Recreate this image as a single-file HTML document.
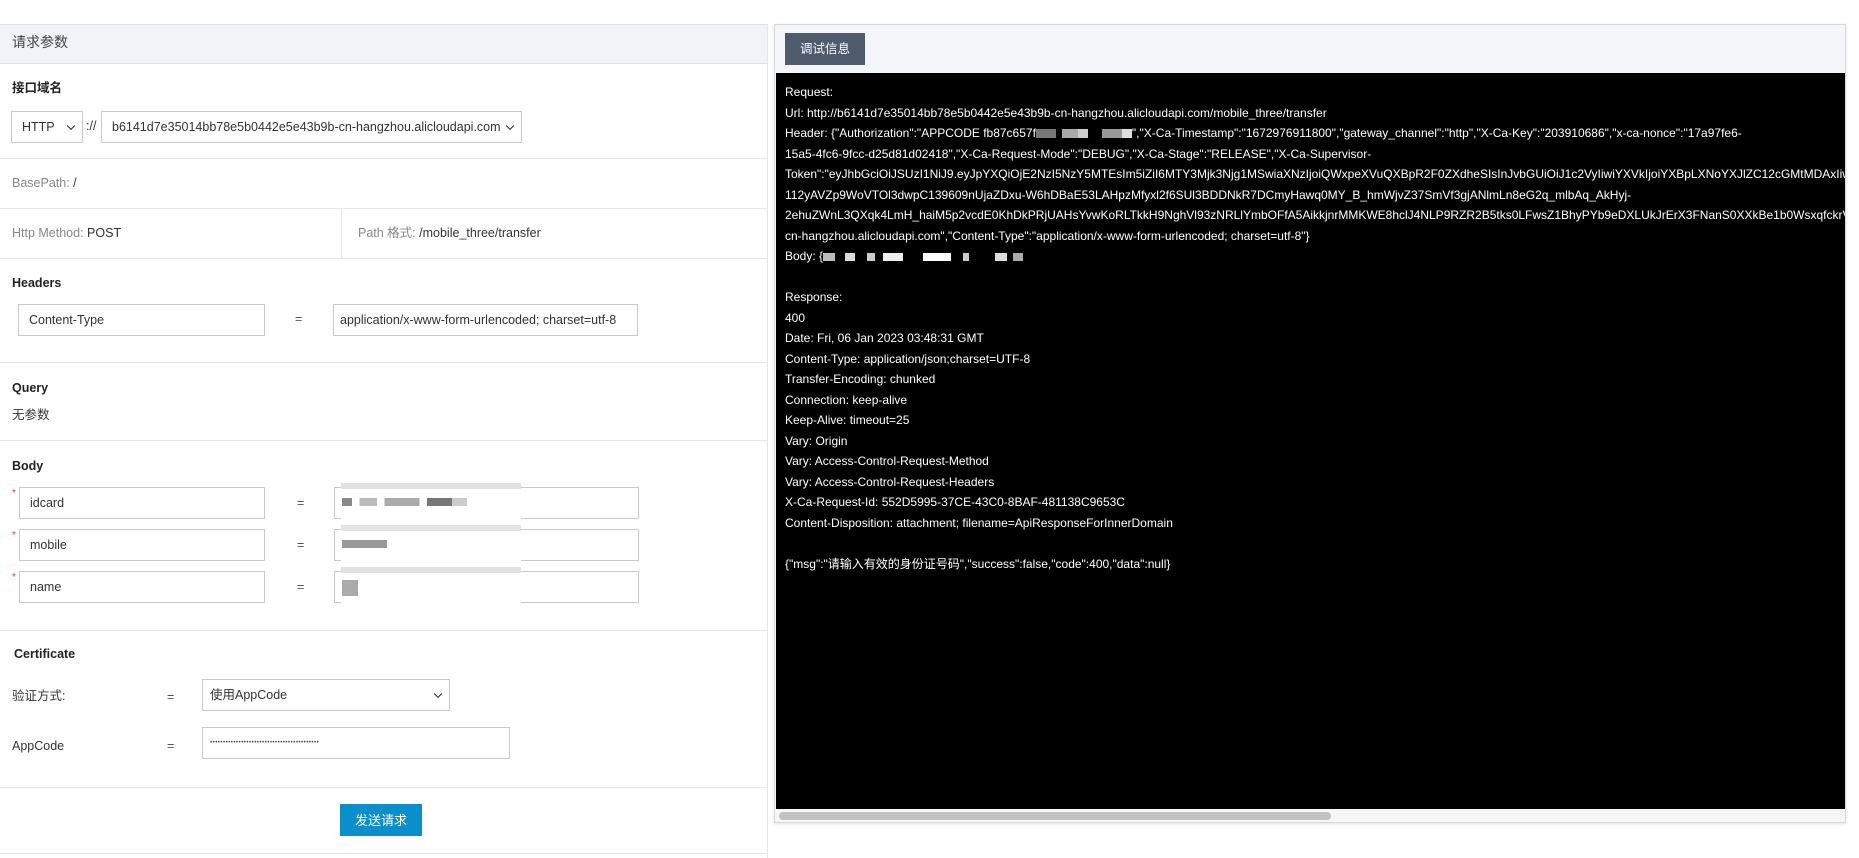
<!DOCTYPE html>
<html><head><meta charset="utf-8"><style>
*{box-sizing:border-box;margin:0;padding:0}
body{width:1859px;height:858px;background:#fff;font-family:"Liberation Sans","Noto Sans CJK SC",sans-serif;font-size:12.5px;color:#333;position:relative;overflow:hidden;line-height:15px}
.a{position:absolute;line-height:15px}
.hl{position:absolute;left:0;width:767px;height:1px;background:#e3e6ec}
.box{position:absolute;border:1px solid #c9c9c9;background:#fff;padding-left:10px;display:flex;align-items:center;font-size:12.5px;color:#333}
.b{font-weight:bold;color:#222}
.g{color:#888}
.star{position:absolute;color:#e33;font-size:10px}
.eq{position:absolute;color:#555}
.chev{position:absolute;right:8px;top:50%;width:6px;height:6px;border-right:1.6px solid #222;border-bottom:1.6px solid #222;transform:translateY(-70%) rotate(45deg)}
#con{position:absolute;left:776px;top:73px;width:1069px;height:736px;background:#000;overflow:hidden;color:#fff;font-size:12px;line-height:15px}
#con div{position:absolute;left:9px;white-space:nowrap}
.bl{display:inline-block;height:9px;vertical-align:middle}
</style></head><body>
<!-- left panel -->
<div class="a" style="left:0;top:24px;width:767px;height:40px;background:#f1f3f8;border-top:1px solid #dde1e8;border-bottom:1px solid #dde1e8"></div>
<div class="a" style="left:767px;top:24px;width:1px;height:834px;background:#e3e6ec"></div>
<div class="a" style="left:12px;top:35px;font-size:14px;color:#444">请求参数</div>
<div class="a b" style="left:12px;top:81px">接口域名</div>
<div class="box" style="left:11px;top:111px;width:72px;height:32px">HTTP<span class="chev"></span></div>
<div class="a" style="left:86px;top:119px">://</div>
<div class="box" style="left:101px;top:111px;width:421px;height:32px">b6141d7e35014bb78e5b0442e5e43b9b-cn-hangzhou.alicloudapi.com<span class="chev"></span></div>
<div class="hl" style="top:158px"></div>
<div class="a" style="left:12px;top:176px"><span class="g">BasePath:</span> /</div>
<div class="hl" style="top:208px"></div>
<div class="a" style="left:341px;top:208px;width:1px;height:50px;background:#e3e6ec"></div>
<div class="a" style="left:12px;top:226px"><span class="g">Http Method:</span> POST</div>
<div class="a" style="left:358px;top:226px"><span class="g">Path 格式:</span> /mobile_three/transfer</div>
<div class="hl" style="top:258px"></div>
<div class="a b" style="left:12px;top:276px">Headers</div>
<div class="box" style="left:18px;top:304px;width:247px;height:32px">Content-Type</div>
<div class="eq" style="left:295px;top:312px">=</div>
<div class="box" style="left:333px;top:304px;width:305px;height:32px;padding-left:6px">application/x-www-form-urlencoded; charset=utf-8</div>
<div class="hl" style="top:362px"></div>
<div class="a b" style="left:12px;top:381px">Query</div>
<div class="a" style="left:12px;top:408px">无参数</div>
<div class="hl" style="top:440px"></div>
<div class="a b" style="left:12px;top:459px">Body</div>

<div class="star" style="left:12px;top:486px">*</div>
<div class="box" style="left:19px;top:487px;width:246px;height:32px">idcard</div>
<div class="eq" style="left:297px;top:496px">=</div>
<div class="box" style="left:334px;top:487px;width:305px;height:32px"></div>
<div class="star" style="left:12px;top:528px">*</div>
<div class="box" style="left:19px;top:529px;width:246px;height:32px">mobile</div>
<div class="eq" style="left:297px;top:538px">=</div>
<div class="box" style="left:334px;top:529px;width:305px;height:32px"></div>
<div class="star" style="left:12px;top:570px">*</div>
<div class="box" style="left:19px;top:571px;width:246px;height:32px">name</div>
<div class="eq" style="left:297px;top:580px">=</div>
<div class="box" style="left:334px;top:571px;width:305px;height:32px"></div>
<div class="a" style="left:341px;top:483px;width:180px;height:125px;background:#fff"></div>
<div class="a" style="left:341px;top:483px;width:180px;height:6px;background:#e2e2e2"></div>
<div class="a" style="left:341px;top:525px;width:180px;height:6px;background:#e2e2e2"></div>
<div class="a" style="left:341px;top:567px;width:180px;height:6px;background:#e2e2e2"></div>
<div class="a" style="left:342px;top:498px;width:125px;height:8px;background:linear-gradient(90deg,#888 0 8%,#fff 8% 14%,#bbb 14% 28%,#fff 28% 34%,#aaa 34% 62%,#fff 62% 68%,#777 68% 88%,#ccc 88%)"></div>
<div class="a" style="left:342px;top:540px;width:45px;height:8px;background:#999"></div>
<div class="a" style="left:342px;top:580px;width:16px;height:16px;background:#aaa"></div>
<div class="hl" style="top:630px"></div>
<div class="a b" style="left:14px;top:647px">Certificate</div>
<div class="a" style="left:12px;top:689px">验证方式:</div>
<div class="eq" style="left:167px;top:690px">=</div>
<div class="box" style="left:202px;top:679px;width:248px;height:32px;padding-left:7px">使用AppCode<span class="chev"></span></div>
<div class="a" style="left:12px;top:739px">AppCode</div>
<div class="eq" style="left:167px;top:739px">=</div>
<div class="box" style="left:202px;top:727px;width:308px;height:32px;padding-left:7px;font-size:6px;letter-spacing:0.5px;color:#444">••••••••••••••••••••••••••••••••••••••••••</div>
<div class="hl" style="top:787px"></div>
<div class="a" style="left:340px;top:804px;width:82px;height:32px;background:#0b8fcb;color:#fff;display:flex;align-items:center;justify-content:center;font-size:13px">发送请求</div>
<div class="hl" style="top:853px"></div>

<!-- right panel -->
<div class="a" style="left:774px;top:24px;width:1072px;height:799px;border:1px solid #d6d9de;background:#f5f6f8;box-shadow:0 1px 3px rgba(0,0,0,.12)"></div>
<div class="a" style="left:775px;top:25px;width:1070px;height:48px;background:#f5f6fa"></div>
<div class="a" style="left:785px;top:33px;width:80px;height:32px;background:#4e5b6c;color:#fff;display:flex;align-items:center;justify-content:center;font-size:12.5px">调试信息</div>
<div id="con">
<div style="top:12px">Request:</div>
<div style="top:33px">Url: http://b6141d7e35014bb78e5b0442e5e43b9b-cn-hangzhou.alicloudapi.com/mobile_three/transfer</div>
<div style="top:53px">Header: {"Authorization":"APPCODE fb87c657f<span class="bl" style="width:20px;background:#777"></span><span class="bl" style="width:6px"></span><span class="bl" style="width:16px;background:#aaa"></span><span class="bl" style="width:10px;background:#ccc"></span><span class="bl" style="width:14px"></span><span class="bl" style="width:20px;background:#999"></span><span class="bl" style="width:10px;background:#ddd"></span>","X-Ca-Timestamp":"1672976911800","gateway_channel":"http","X-Ca-Key":"203910686","x-ca-nonce":"17a97fe6-</div>
<div style="top:74px">15a5-4fc6-9fcc-d25d81d02418","X-Ca-Request-Mode":"DEBUG","X-Ca-Stage":"RELEASE","X-Ca-Supervisor-</div>
<div style="top:94px">Token":"eyJhbGciOiJSUzI1NiJ9.eyJpYXQiOjE2NzI5NzY5MTEsIm5iZiI6MTY3Mjk3Njg1MSwiaXNzIjoiQWxpeXVuQXBpR2F0ZXdheSIsInJvbGUiOiJ1c2VyIiwiYXVkIjoiYXBpLXNoYXJlZC12cGMtMDAxIiwi</div>
<div style="top:115px">112yAVZp9WoVTOl3dwpC139609nUjaZDxu-W6hDBaE53LAHpzMfyxl2f6SUl3BDDNkR7DCmyHawq0MY_B_hmWjvZ37SmVf3gjANlmLn8eG2q_mlbAq_AkHyj-</div>
<div style="top:135px">2ehuZWnL3QXqk4LmH_haiM5p2vcdE0KhDkPRjUAHsYvwKoRLTkkH9NghVl93zNRLlYmbOFfA5AikkjnrMMKWE8hclJ4NLP9RZR2B5tks0LFwsZ1BhyPYb9eDXLUkJrErX3FNanS0XXkBe1b0WsxqfckrV</div>
<div style="top:156px">cn-hangzhou.alicloudapi.com","Content-Type":"application/x-www-form-urlencoded; charset=utf-8"}</div>
<div style="top:176px">Body: {<span class="bl" style="width:200px;height:8px;background:linear-gradient(90deg,#bbb 0 6%,#000 6% 11%,#ddd 11% 16%,#000 16% 22%,#ccc 22% 26%,#000 26% 30%,#eee 30% 40%,#000 40% 50%,#fff 50% 64%,#000 64% 70%,#ccc 70% 73%,#000 73% 86%,#ddd 86% 92%,#000 92% 95%,#aaa 95%)"></span></div>
<div style="top:217px">Response:</div>
<div style="top:238px">400</div>
<div style="top:258px">Date: Fri, 06 Jan 2023 03:48:31 GMT</div>
<div style="top:279px">Content-Type: application/json;charset=UTF-8</div>
<div style="top:299px">Transfer-Encoding: chunked</div>
<div style="top:320px">Connection: keep-alive</div>
<div style="top:340px">Keep-Alive: timeout=25</div>
<div style="top:361px">Vary: Origin</div>
<div style="top:381px">Vary: Access-Control-Request-Method</div>
<div style="top:402px">Vary: Access-Control-Request-Headers</div>
<div style="top:422px">X-Ca-Request-Id: 552D5995-37CE-43C0-8BAF-481138C9653C</div>
<div style="top:443px">Content-Disposition: attachment; filename=ApiResponseForInnerDomain</div>
<div style="top:484px">{"msg":"请输入有效的身份证号码","success":false,"code":400,"data":null}</div>
</div>
<div class="a" style="left:776px;top:809px;width:1069px;height:13px;background:#f6f6f6"></div>
<div class="a" style="left:779px;top:812px;width:552px;height:8px;border-radius:4px;background:#c2c2c2"></div>
</body></html>
